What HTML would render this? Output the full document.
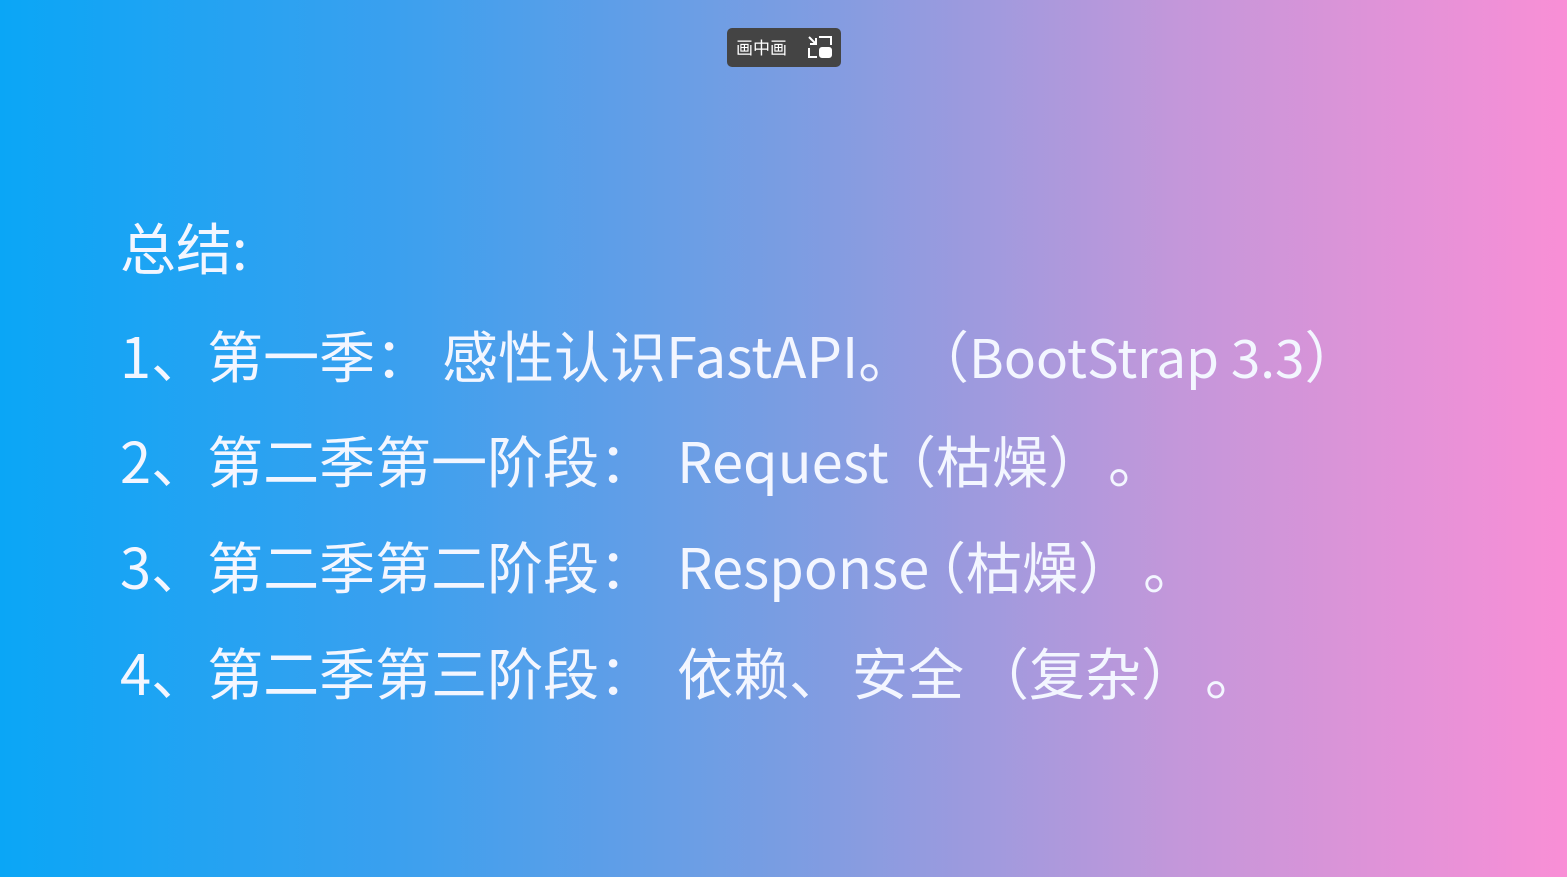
<!DOCTYPE html>
<html><head><meta charset="utf-8"><style>
html,body{margin:0;padding:0}
body{width:1567px;height:877px;overflow:hidden;position:relative;
background:linear-gradient(90deg,#0aa6f6 0%,#3aa0ef 25%,#7a9de2 50%,#c397da 75%,#f98fd6 100%);
font-family:"Liberation Sans","Noto Sans CJK SC",sans-serif;color:#f3f6ff}
.l{position:absolute;left:0;font-size:56px;line-height:70px;white-space:nowrap;font-family:"Noto Sans CJK SC","Liberation Sans",sans-serif}
.l span{position:absolute;top:0}
.pip{position:absolute;left:727px;top:28px;width:114px;height:39px;background:#444;border-radius:5px;color:#fff;font-size:17px;font-family:"Noto Sans CJK SC",sans-serif}
</style></head><body>
<div class="pip"><span style="position:absolute;left:9px;top:9px;line-height:20px">画中画</span>
<svg style="position:absolute;left:80px;top:7px" width="26" height="24" viewBox="0 0 26 24" fill="none" stroke="#fff" stroke-width="2"><path d="M2 2l7 7M3 9h6V3"/><path d="M12 2h12v8"/><path d="M2 13v9h8"/><rect x="13" y="13" width="11" height="9" rx="2" fill="#fff"/></svg></div>
<div class="l" style="top:212px"><span style="left:120px">总结:</span></div>
<div class="l" style="top:320px"><span style="left:120px">1、第一季：</span><span style="left:442px">感性认识FastAPI。</span><span style="left:913px">（<span style="position:static;font-size:53px">BootStrap 3.3</span>）</span></div>
<div class="l" style="top:425px"><span style="left:120px">2、第二季第一阶段：</span><span style="left:677px">Request</span><span style="left:880px">（枯燥）</span><span style="left:1108px">。</span></div>
<div class="l" style="top:531px"><span style="left:120px">3、第二季第二阶段：</span><span style="left:677px">Response</span><span style="left:910px">（枯燥）</span><span style="left:1143px">。</span></div>
<div class="l" style="top:637px"><span style="left:120px">4、第二季第三阶段：</span><span style="left:677px">依赖、</span><span style="left:852px">安全</span><span style="left:973px">（复杂）</span><span style="left:1205px">。</span></div>
</body></html>
